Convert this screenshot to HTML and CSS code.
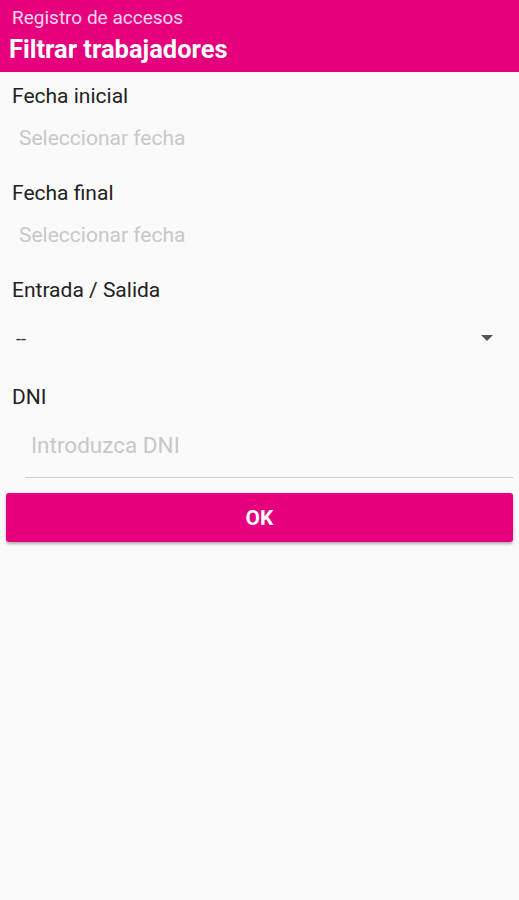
FILE: index.html
```html
<!DOCTYPE html>
<html lang="es">
<head>
    <meta charset="UTF-8">
    <meta name="viewport" content="width=device-width, initial-scale=1.0">
    <title>Filtrar trabajadores</title>
    <link rel="stylesheet" href="styles.css">
</head>
<body>

<div class="toolbar">
    <div class="subtitle">Registro de accesos</div>
    <div class="title">Filtrar trabajadores</div>
</div>

<form class="filter">
    <div class="field">
        <label class="label">Fecha inicial</label>
        <div class="picker">Seleccionar fecha</div>
    </div>
    <div class="field">
        <label class="label">Fecha final</label>
        <div class="picker">Seleccionar fecha</div>
    </div>
    <div class="field">
        <label class="label">Entrada / Salida</label>
        <div class="spinner">
            <span>--</span>
            <svg width="14" height="8" viewBox="0 0 14 8"><path d="M1 1 L7 7 L13 1 Z" fill="#555"/></svg>
        </div>
    </div>
    <div class="field">
        <label class="label">DNI</label>
        <input class="dni" type="text" placeholder="Introduzca DNI">
    </div>
    <button type="button" class="ok">OK</button>
</form>

</body>
</html>
```
FILE: styles.css
```css
body {
    font-family: Roboto, "Noto Sans", sans-serif;
    margin: 0;
    background-color: #fafafa;
    height: 900px;
}
.toolbar {
    background-color: #e6007e;
    color: white;
    height: 72px;
    padding: 6px 9px 0;
    box-sizing: border-box;
}
.subtitle {
    font-size: 19px;
    line-height: 24px;
    color: #ffd6ec;
    padding-left: 3px;
}
.title {
    font-size: 25.5px;
    font-weight: bold;
    line-height: 30px;
    margin-top: 4px;
}
.filter {
    display: flex;
    flex-direction: column;
    padding: 10px 6px 0;
}
.field {
    display: flex;
    flex-direction: column;
}
.label {
    font-size: 21px;
    color: #222;
    padding-left: 6px;
    line-height: 28px;
}
.picker {
    font-size: 21px;
    line-height: 28px;
    color: #c8c8c8;
    padding: 14px 0 0 13px;
    height: 69px;
    box-sizing: border-box;
}
.spinner {
    display: flex;
    justify-content: space-between;
    align-items: center;
    padding: 0 19px 0 10px;
    height: 68px;
    font-size: 18px;
    color: #333;
    margin-bottom: 11px;
}
.dni {
    margin: 14px 0 0 19px;
    border: none;
    border-bottom: 1px solid #ccc;
    background: transparent;
    font-family: inherit;
    font-size: 22.5px;
    line-height: 28px;
    height: 53px;
    box-sizing: border-box;
    padding: 6px 6px 18px;
    outline: none;
}
.dni::placeholder {
    color: #c8c8c8;
}
.ok {
    margin-top: 15px;
    height: 49px;
    background-color: #e6007e;
    color: white;
    border: none;
    border-radius: 3px;
    font-family: inherit;
    font-size: 21px;
    font-weight: bold;
    box-shadow: 0 2px 3px rgba(0, 0, 0, 0.3);
}
```
